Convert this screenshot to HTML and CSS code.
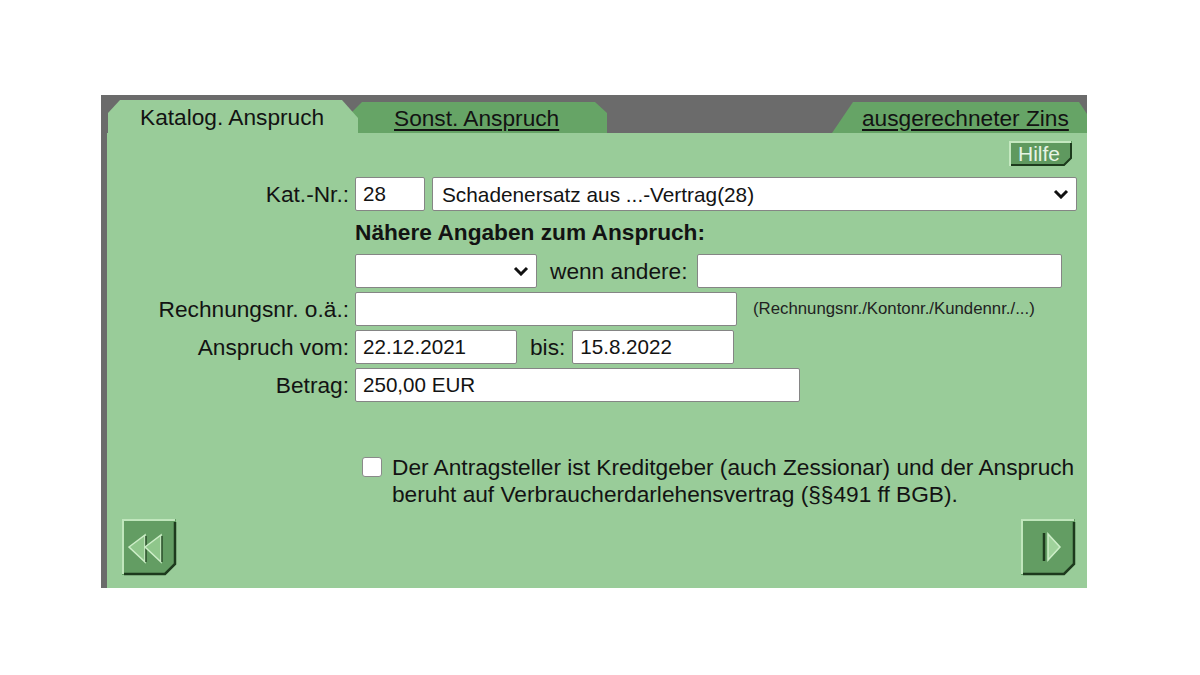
FILE: index.html
```html
<!DOCTYPE html>
<html lang="de">
<head>
    <meta charset="UTF-8">
    <title>Anspruch</title>
    <link rel="stylesheet" href="styles.css">
</head>
<body>
    <div class="panel">
        <div class="tabs">
            <a class="tab tab-active">Katalog. Anspruch</a>
            <a class="tab tab-sonst" href="#">Sonst. Anspruch</a>
            <a class="tab tab-zins" href="#">ausgerechneter Zins</a>
        </div>
        <div class="content">
            <div class="help-row">
                <a class="help" href="#">
                    <svg class="help-bg" width="64" height="26" viewBox="0 0 64 26">
                        <polygon points="0,0 63,0 63,17 55,25 0,25" fill="#5f995f"/>
                        <polyline points="1,25 1,1 62,1" fill="none" stroke="#c4e8c0" stroke-width="2"/>
                        <polyline points="62,2 62,17 55,24 2,24" fill="none" stroke="#1d3a1d" stroke-width="2"/>
                    </svg>
                    <span class="help-text">Hilfe</span>
                </a>
            </div>
            <form class="form">
                <div class="row">
                    <label class="lbl">Kat.-Nr.:</label>
                    <input class="inp w-nr" type="text" value="28">
                    <div class="sel w-kat">
                        <select>
                            <option>Schadenersatz aus ...-Vertrag(28)</option>
                        </select>
                        <svg class="chev" width="16" height="10" viewBox="0 0 16 10"><polyline points="2,2 8,8 14,2" fill="none" stroke="#111" stroke-width="3"/></svg>
                    </div>
                </div>
                <div class="row row-head">
                    <span class="lbl"></span>
                    <b class="head">Nähere Angaben zum Anspruch:</b>
                </div>
                <div class="row">
                    <span class="lbl"></span>
                    <div class="sel w-art">
                        <select>
                            <option></option>
                        </select>
                        <svg class="chev" width="16" height="10" viewBox="0 0 16 10"><polyline points="2,2 8,8 14,2" fill="none" stroke="#111" stroke-width="3"/></svg>
                    </div>
                    <span class="mid">wenn andere:</span>
                    <input class="inp w-andere" type="text">
                </div>
                <div class="row">
                    <label class="lbl">Rechnungsnr. o.ä.:</label>
                    <input class="inp w-rech" type="text">
                    <span class="hint">(Rechnungsnr./Kontonr./Kundennr./...)</span>
                </div>
                <div class="row">
                    <label class="lbl">Anspruch vom:</label>
                    <input class="inp w-date" type="text" value="22.12.2021">
                    <span class="mid mid-bis">bis:</span>
                    <input class="inp w-date" type="text" value="15.8.2022">
                </div>
                <div class="row">
                    <label class="lbl">Betrag:</label>
                    <input class="inp w-betrag" type="text" value="250,00 EUR">
                </div>
                <div class="check">
                    <span class="box"></span>
                    <span class="check-text">Der Antragsteller ist Kreditgeber (auch Zessionar) und der Anspruch<br>beruht auf Verbraucherdarlehensvertrag (§§491 ff BGB).</span>
                </div>
            </form>
            <div class="nav">
                <a class="nav-btn" href="#">
                    <svg width="56" height="57" viewBox="0 0 56 57">
                        <polygon points="0,0 54,0 54,45 43,56 0,56" fill="#639d63"/>
                        <polyline points="1,55 1,1 53,1" fill="none" stroke="#c0e6bc" stroke-width="2"/>
                        <polyline points="53,3 53,45 43,55 2,55" fill="none" stroke="#1d3a1d" stroke-width="2.5"/>
                        <polygon points="7,28 23,16 23,43" fill="#8fc68b" stroke="#cdeec8" stroke-width="1.5"/>
                        <line x1="24" y1="17" x2="24" y2="43" stroke="#2b4f2b" stroke-width="1.5"/>
                        <polygon points="23,28 39,16 39,43" fill="#8fc68b" stroke="#cdeec8" stroke-width="1.5"/>
                        <line x1="40" y1="17" x2="40" y2="43" stroke="#2b4f2b" stroke-width="1.5"/>
                    </svg>
                </a>
                <a class="nav-btn" href="#">
                    <svg width="56" height="57" viewBox="0 0 56 57">
                        <polygon points="0,0 54,0 54,45 43,56 0,56" fill="#639d63"/>
                        <polyline points="1,55 1,1 53,1" fill="none" stroke="#c0e6bc" stroke-width="2"/>
                        <polyline points="53,3 53,45 43,55 2,55" fill="none" stroke="#1d3a1d" stroke-width="2.5"/>
                        <line x1="23" y1="14" x2="23" y2="42" stroke="#1d3a1d" stroke-width="2.5"/>
                        <polygon points="27,15 27,41 39,28" fill="#9fd29b" stroke="#cdeec8" stroke-width="1.5"/>
                    </svg>
                </a>
            </div>
        </div>
    </div>
</body>
</html>
```

FILE: styles.css
```css
body {
    margin: 0;
    background: #fff;
    font-family: "Liberation Sans", Arial, sans-serif;
    font-size: 22.7px;
    color: #131313;
}
.panel {
    width: 980px;
    height: 493px;
    margin: 95px 0 0 101px;
    border-left: 6px solid #6b6b6b;
    background: #99cc99;
    display: flex;
    flex-direction: column;
}
.tabs {
    height: 38px;
    flex: none;
    background: #6b6b6b;
    display: flex;
    align-items: flex-end;
}
.tab {
    display: flex;
    align-items: center;
    box-sizing: border-box;
    color: #131313;
    text-decoration: underline;
    text-underline-offset: 3px;
}
.tab-active {
    position: relative;
    z-index: 2;
    width: 250px;
    height: 33px;
    margin-left: 1px;
    padding: 2px 0 0 32px;
    background: #99cc99;
    text-decoration: none;
    clip-path: polygon(0 13px, 12px 0, calc(100% - 16px) 0, 100% 18px, 100% 100%, 0 100%);
}
.tab-sonst {
    position: relative;
    z-index: 1;
    width: 257px;
    height: 31px;
    margin-left: -8px;
    padding: 1px 0 0 44px;
    background: #66a466;
    clip-path: polygon(0 12px, 12px 0, calc(100% - 12px) 0, 100% 11px, 100% 100%, 0 100%);
}
.tab-zins {
    width: 255px;
    height: 31px;
    margin-left: auto;
    padding: 1px 0 0 30px;
    background: #66a466;
    clip-path: polygon(0 100%, 21px 0, calc(100% - 8px) 0, 100% 12px, 100% 100%);
}
.content {
    flex: 1;
    display: flex;
    flex-direction: column;
}
.help-row {
    display: flex;
    justify-content: flex-end;
    padding: 8px 14px 0 0;
}
.help {
    position: relative;
    width: 64px;
    height: 26px;
    display: flex;
    align-items: center;
    justify-content: center;
    text-decoration: none;
}
.help-bg {
    position: absolute;
    left: 0;
    top: 0;
}
.help-text {
    position: relative;
    font-size: 21px;
    color: #e6f4e4;
    margin-top: -1px;
    margin-left: -4px;
}
.form {
    margin: 10px 0 0;
    display: flex;
    flex-direction: column;
    gap: 4px;
}
.row {
    height: 34px;
    display: flex;
    align-items: center;
}
.row-head {
    height: 35px;
}
.lbl {
    width: 242px;
    flex: none;
    margin-right: 6px;
    text-align: right;
}
.head {
    font-weight: bold;
}
.inp {
    box-sizing: border-box;
    height: 34px;
    padding: 0 7px;
    border: 1px solid #858585;
    border-radius: 2px;
    background: #fff;
    font-family: inherit;
    font-size: 20.6px;
    color: #131313;
}
.sel {
    position: relative;
    height: 34px;
}
.sel select {
    appearance: none;
    box-sizing: border-box;
    width: 100%;
    height: 34px;
    padding: 0 30px 0 9px;
    border: 1px solid #858585;
    border-radius: 2px;
    background: #fff;
    font-family: inherit;
    font-size: 20.8px;
    color: #131313;
}
.chev {
    position: absolute;
    right: 8px;
    top: 12px;
}
.w-nr {
    width: 70px;
    margin-right: 7px;
}
.w-kat {
    width: 645px;
}
.w-art {
    width: 182px;
}
.mid {
    margin: 0 9px 0 13px;
}
.mid-bis {
    margin-right: 7px;
}
.w-andere {
    width: 365px;
}
.w-rech {
    width: 382px;
}
.hint {
    margin-left: 16px;
    font-size: 16.8px;
    color: #222;
}
.w-date {
    width: 162px;
}
.w-betrag {
    width: 445px;
}
.check {
    display: flex;
    align-items: flex-start;
    margin: 48px 0 0 255px;
    line-height: 27px;
}
.box {
    box-sizing: border-box;
    flex: none;
    width: 20px;
    height: 20px;
    margin: 3px 10px 0 0;
    border: 1px solid #8a8a8a;
    border-radius: 3px;
    background: #fff;
}
.nav {
    display: flex;
    justify-content: space-between;
    padding: 11px 10px 0 15px;
}
.nav-btn {
    display: block;
    width: 56px;
    height: 57px;
}
```
